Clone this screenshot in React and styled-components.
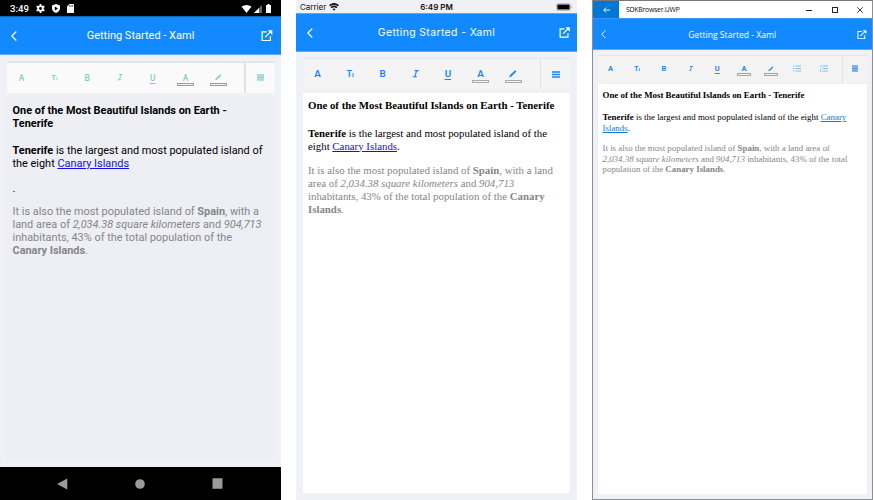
import React from 'react';
import styled, { createGlobalStyle } from 'styled-components';

const GlobalStyle = createGlobalStyle`
  * { box-sizing: border-box; }
  body { margin: 0; background: #fff; }
`;

const Board = styled.main`
  display: grid;
  grid-template-columns: 281px 281px 281px;
  column-gap: 15px;
  width: 873px;
  height: 500px;
  overflow: hidden;
`;

const Screen = styled.section`
  display: flex;
  flex-direction: column;
  height: 500px;
  min-width: 0;
  background: #eff1f6;
  font-family: ${p => p.$font};
`;

const WindowScreen = styled(Screen)`
  border: 1px solid #8d8f93;
  border-top-color: #77797c;
`;

const StatusBar = styled.div`
  display: flex;
  align-items: center;
  flex: none;
  height: ${p => p.$height}px;
  background: ${p => p.$bg};
  color: ${p => p.$color};
`;

const AndroidStatus = styled(StatusBar)`
  padding: 1px 8px 0 10px;
  font: 500 9.6px/16px Roboto, sans-serif;
  svg { display: block; }
`;
const Clock = styled.span`
  width: 26px;
`;
const StatusIcons = styled.div`
  display: flex;
  align-items: center;
  gap: ${p => p.$gap}px;
  margin-left: ${p => (p.$end ? 'auto' : '0')};
`;

const IosStatus = styled(StatusBar)`
  display: grid;
  grid-template-columns: 1fr auto 1fr;
  padding: 1px 4px 0 4px;
  font: 8px/12px Inter, "Liberation Sans", sans-serif;
`;
const Carrier = styled.div`
  display: flex;
  align-items: center;
  gap: 3px;
`;
const IosTime = styled.span`
  font-weight: 600;
`;
const BatteryWrap = styled.div`
  display: flex;
  justify-content: flex-end;
  align-items: center;
`;

const TitleBar = styled(StatusBar)`
  font: 6.9px/17px "Open Sans", sans-serif;
`;
const BackButton = styled.div`
  display: grid;
  place-items: center;
  width: 26px;
  height: 100%;
  background: #0078d7;
  margin-right: 7px;
`;
const WindowName = styled.span`
  letter-spacing: -0.25px;
`;
const WindowButtons = styled.div`
  display: flex;
  align-items: center;
  justify-content: space-between;
  width: 57px;
  margin: 0 9px 0 auto;
`;

const Header = styled.header`
  display: grid;
  grid-template-columns: 20px 1fr 20px;
  align-items: center;
  flex: none;
  height: ${p => p.$height}px;
  padding: ${p => p.$drop || 0}px ${p => p.$padRight}px 0 ${p => p.$padLeft}px;
  background: #1389ff;
  border-top: 1px solid ${p => p.$edge};
  border-bottom: 1px solid #58a9f9;
  color: #fff;
  svg { display: block; }
  > :last-child { justify-self: end; }
`;
const Title = styled.h1`
  margin: 0;
  padding-right: ${p => p.$shift || 0}px;
  text-align: center;
  white-space: nowrap;
  font-weight: 400;
  font-size: ${p => p.$size}px;
  line-height: 14px;
  letter-spacing: ${p => p.$spacing || 0}px;
`;

const Toolbar = styled.div`
  display: flex;
  flex: none;
  height: ${p => p.$height}px;
  margin: ${p => p.$margin};
  background: ${p => p.$bg};
  border-top: ${p => p.$line}px solid #e3e5e8;
  color: ${p => p.$color};
`;
const Tools = styled.div`
  display: flex;
  align-items: center;
  flex: 1;
  gap: ${p => p.$gap}px;
  padding-bottom: ${p => p.$lift || 0}px;
`;
const Tool = styled.div`
  display: flex;
  flex-direction: column;
  align-items: center;
  justify-content: center;
  flex: none;
  position: relative;
  width: ${p => p.$width}px;
  height: 22px;
  svg { display: block; }
`;
const Swatch = styled.span`
  position: absolute;
  left: 50%;
  top: ${p => p.$top}px;
  width: ${p => p.$width}px;
  height: 3px;
  margin-left: ${p => -p.$width / 2 + 0.5}px;
  border: 1px solid ${p => p.$edge};
  background: #f3f3f3;
`;
const MenuTool = styled.div`
  display: grid;
  place-items: center;
  flex: none;
  width: ${p => p.$width}px;
  padding-bottom: ${p => p.$lift || 0}px;
  border-left: ${p => p.$line}px solid #e1e2e4;
`;
const Letter = styled.span`
  font: ${p => p.$weight || 500} ${p => p.$size}px/10px Roboto, sans-serif;
  white-space: nowrap;
  text-decoration: ${p => (p.$under ? 'underline' : 'none')};
  text-underline-offset: 1.5px;
  text-decoration-thickness: 1px;
  small { font-size: 0.75em; }
`;

const Editor = styled.article`
  flex: 1;
  margin: ${p => p.$margin};
  padding: ${p => p.$padding};
  background: ${p => p.$bg};
  color: #000;
  font: ${p => p.$size}px/${p => p.$leading}px ${p => p.$font};
  overflow: hidden;
`;
const Paragraph = styled.p`
  margin: 0 0 ${p => p.$after}px;
  color: ${p => (p.$muted ? '#858688' : 'inherit')};
`;
const Line = styled.span`
  display: block;
  white-space: nowrap;
`;
const Link = styled.a`
  color: ${p => p.$color || '#1010ee'};
  text-decoration: underline;
`;

const NavBar = styled.nav`
  display: flex;
  justify-content: space-between;
  align-items: center;
  flex: none;
  height: 33px;
  padding: 0 58px 0 57px;
  background: #000;
`;

const Chevron = ({ size = 10 }) => (
  <svg width={size * 0.6} height={size} viewBox="0 0 6 10" fill="none" stroke="currentColor" strokeWidth="1.15">
    <path d="M5.3.5.8 5l4.5 4.5" />
  </svg>
);
const OpenIcon = ({ size = 12 }) => (
  <svg width={size} height={size} viewBox="0 0 12 12" fill="none" stroke="currentColor" strokeWidth="1.3">
    <path d="M6 2H1.2v9h8.6V6.5M4.5 7.3 9.6 2.2" />
    <path d="M7 .3h4.8v4.8z" fill="currentColor" stroke="none" />
  </svg>
);
const ItalicIcon = ({ size = 8 }) => (
  <svg width={size} height={size} viewBox="0 0 8 8" fill="none" stroke="currentColor" strokeWidth="1.2">
    <path d="M2.8.7h4.4M.8 7.3h4.4M5 .7 3 7.3" />
  </svg>
);
const PenIcon = ({ size = 8 }) => (
  <svg width={size} height={size} viewBox="0 0 8 8" fill="none" stroke="currentColor">
    <path d="M1.8 6.2 7.3.9" strokeWidth="2" />
    <path d="m.2 7.8.7-2.5 1.8 1.8z" fill="currentColor" stroke="none" />
  </svg>
);
const MenuIcon = ({ width = 8, soft }) => (
  <svg width={width} height="7" viewBox="0 0 8 7" preserveAspectRatio="none" fill="none" stroke="currentColor">
    {soft && <path d="M0 3.5h8" strokeWidth="6" opacity=".5" />}
    <path d="M0 1h8M0 3.5h8M0 6h8" strokeWidth={soft ? 0.9 : 1.3} />
  </svg>
);
const ListIcon = ({ numbered }) => (
  <svg width="8" height="7" viewBox="0 0 8 7" fill="none" stroke="currentColor" opacity=".65">
    <path d="M2.5 1H8M2.5 3.5H8M2.5 6H8" strokeWidth=".8" />
    <path d={numbered ? 'M1 0v2.5M.6 4.2v2.6' : 'M0 1h1.2M0 3.5h1.2M0 6h1.2'} strokeWidth=".8" />
  </svg>
);

const GearIcon = () => (
  <svg width="9" height="9" viewBox="0 0 10 10">
    <circle cx="5" cy="5" r="2.6" fill="none" stroke="#fff" strokeWidth="2" />
    <path d="M5 0v2M5 8v2M.7 2.5l1.8 1M7.5 6.5l1.8 1M.7 7.5l1.8-1M7.5 3.5l1.8-1" stroke="#fff" strokeWidth="2" />
  </svg>
);
const ShieldIcon = () => (
  <svg width="8" height="9" viewBox="0 0 8 9">
    <path d="M4 0 8 1.4V4.5Q7.6 7.8 4 9 .4 7.8 0 4.5V1.4z" fill="#fff" />
    <path d="M2.8 2.4 6 4.4 2.8 6.4z" fill="#000" />
  </svg>
);
const CardIcon = () => (
  <svg width="7" height="9" viewBox="0 0 7 9">
    <path d="M2.4 0H6.4Q7 0 7 .6V8.4Q7 9 6.4 9H.6Q0 9 0 8.4V2.4z" fill="#fff" />
    <path d="M2.6 1v1.8M4.1 1v1.8M5.6 1v1.8" stroke="#222" strokeWidth=".7" />
  </svg>
);

function ToolSet({ cell, size, weight, swatchWidth, swatchTop, swatchEdge, lists }) {
  const letter = { $size: size, $weight: weight };
  const swatch = { $width: swatchWidth, $top: swatchTop, $edge: swatchEdge };
  return (
    <>
      <Tool $width={cell}><Letter {...letter}>A</Letter></Tool>
      <Tool $width={cell}><Letter {...letter} $size={size * 0.92}>T<small>ı</small></Letter></Tool>
      <Tool $width={cell}><Letter {...letter}>B</Letter></Tool>
      <Tool $width={cell}><ItalicIcon size={size * 0.76} /></Tool>
      <Tool $width={cell}><Letter {...letter} $under>U</Letter></Tool>
      <Tool $width={cell}>
        <Letter {...letter}>A</Letter>
        <Swatch {...swatch} />
      </Tool>
      <Tool $width={cell}>
        <PenIcon size={size * 0.76} />
        <Swatch {...swatch} />
      </Tool>
      {lists && <Tool $width={cell}><ListIcon /></Tool>}
      {lists && <Tool $width={cell}><ListIcon numbered /></Tool>}
    </>
  );
}

function AndroidScreen() {
  return (
    <Screen $font="Roboto, sans-serif">
      <AndroidStatus $height={16} $bg="#000" $color="#fff">
        <Clock>3:49</Clock>
        <StatusIcons $gap={7}><GearIcon /><ShieldIcon /><CardIcon /></StatusIcons>
        <StatusIcons $gap={2} $end>
          <svg width="11" height="8" viewBox="0 0 10 8"><path d="M0 1.5Q5-1.5 10 1.5L5 8z" fill="#fff" /></svg>
          <svg width="8" height="8" viewBox="0 0 8 8"><path d="M8 0v8H0z" fill="#666" /><path d="M5 3v5H0z" fill="#fff" /></svg>
          <svg width="9" height="9" viewBox="0 0 9 9"><path d="M2 1h1.5V0h2v1H7v8H2z" fill="#fff" /></svg>
        </StatusIcons>
      </AndroidStatus>
      <Header $height={39} $padLeft={10.5} $padRight={8.5} $edge="#0d65bb">
        <Chevron size={10} />
        <Title as="h1" $size={11} $shift={2}>Getting Started - Xaml</Title>
        <OpenIcon size={11.5} />
      </Header>
      <Toolbar $height={32} $margin="6px 6px 0 7px" $bg="#fafafa" $line={2} $color="#7ccfc2">
        <Tools $gap={3.8} $lift={1}>
          <ToolSet cell={29} size={8.4} swatchWidth={17} swatchTop={16} swatchEdge="#9b9b9b" />
        </Tools>
        <MenuTool $width={31} $line={2} $lift={1}><MenuIcon width={7} soft /></MenuTool>
      </Toolbar>
      <Editor $margin="4px 7px 6px" $padding="7px 5.5px" $bg="#eeeff4" $size={10.92} $leading={13} $font="Roboto, sans-serif">
        <Paragraph $after={14}>
          <Line><b>One of the Most Beautiful Islands on Earth -</b></Line>
          <Line><b>Tenerife</b></Line>
        </Paragraph>
        <Paragraph $after={12}>
          <Line><b>Tenerife</b> is the largest and most populated island of</Line>
          <Line>the eight <Link>Canary Islands</Link></Line>
        </Paragraph>
        <Paragraph $after={10}>.</Paragraph>
        <Paragraph $muted $after={0}>
          <Line>It is also the most populated island of <b>Spain</b>, with a</Line>
          <Line>land area of <i>2,034.38 square kilometers</i> and <i>904,713</i></Line>
          <Line>inhabitants, 43% of the total population of the</Line>
          <Line><b>Canary Islands</b>.</Line>
        </Paragraph>
      </Editor>
      <NavBar>
        <svg width="11" height="12" viewBox="0 0 11 12"><path d="M10.3.5v11L0 6z" fill="#999b9b" /></svg>
        <svg width="10" height="10" viewBox="0 0 10 10"><circle cx="5" cy="5" r="4.8" fill="#999b9b" /></svg>
        <svg width="11" height="11" viewBox="0 0 11 11"><rect x=".5" y=".3" width="10" height="10.5" rx=".4" fill="#999b9b" /></svg>
      </NavBar>
    </Screen>
  );
}

function IosScreen() {
  return (
    <Screen $font="Inter, sans-serif">
      <IosStatus $height={13} $bg="#eff1f6" $color="#111">
        <Carrier>
          Carrier
          <svg width="10" height="8" viewBox="0 0 10 8" fill="none" stroke="#111" strokeWidth="1.6">
            <path d="M.5 2.7Q5-1.1 9.5 2.7M2.1 4.7Q5 2.2 7.9 4.7" />
            <path d="M3.5 6Q5 5 6.5 6L5 7.8z" fill="#111" stroke="none" />
          </svg>
        </Carrier>
        <IosTime>6:49 PM</IosTime>
        <BatteryWrap>
          <svg width="17" height="8" viewBox="0 0 17 8">
            <rect x=".5" y=".5" width="14" height="7" rx="1.8" fill="#fff" stroke="#999" strokeWidth=".6" />
            <rect x="1.4" y="1.4" width="12.2" height="5.2" rx=".9" />
            <path d="M15.5 2.8q1.2 1.2 0 2.4z" fill="#777" />
          </svg>
        </BatteryWrap>
      </IosStatus>
      <Header $height={39} $padLeft={10.5} $padRight={7.5} $edge="#58a9f9">
        <Chevron size={10} />
        <Title $size={10.4} $spacing={0.4} $shift={3}>Getting Started - Xaml</Title>
        <OpenIcon size={11} />
      </Header>
      <Toolbar $height={31} $margin="6px 7px 0 6.5px" $bg="#f4f4f4" $line={1} $color="#1684ff">
        <Tools $gap={2.6}>
          <ToolSet cell={30} size={9.8} weight={600} swatchWidth={17} swatchTop={17} swatchEdge="#aaa" />
        </Tools>
        <MenuTool $width={30} $line={1}><MenuIcon width={8} /></MenuTool>
      </Toolbar>
      <Editor $margin="4px 7px 7px 6.5px" $padding="6px 5.5px" $bg="#fff" $size={10.83} $leading={13} $font='"Liberation Serif", serif'>
        <Paragraph $after={14.5}>
          <Line><b>One of the Most Beautiful Islands on Earth - Tenerife</b></Line>
        </Paragraph>
        <Paragraph $after={11}>
          <Line><b>Tenerife</b> is the largest and most populated island of the</Line>
          <Line>eight <Link>Canary Islands</Link>.</Line>
        </Paragraph>
        <Paragraph $muted $after={0}>
          <Line>It is also the most populated island of <b>Spain</b>, with a land</Line>
          <Line>area of <i>2,034.38 square kilometers</i> and <i>904,713</i></Line>
          <Line>inhabitants, 43% of the total population of the <b>Canary</b></Line>
          <Line><b>Islands</b>.</Line>
        </Paragraph>
      </Editor>
    </Screen>
  );
}

function DesktopScreen() {
  return (
    <WindowScreen $font='"Open Sans", sans-serif'>
      <TitleBar $height={17} $bg="#fff" $color="#111">
        <BackButton>
          <svg width="7" height="6" viewBox="0 0 7 6" fill="none" stroke="#fff" strokeWidth=".9"><path d="M7 3H.8M3.2.5.7 3l2.5 2.5" /></svg>
        </BackButton>
        <WindowName>SDKBrowser.UWP</WindowName>
        <WindowButtons>
          <svg width="6" height="6" viewBox="0 0 6 6" stroke="#222"><path d="M0 3.5h6" /></svg>
          <svg width="6" height="6" viewBox="0 0 6 6" fill="none" stroke="#222"><rect x=".5" y=".5" width="5" height="5" /></svg>
          <svg width="6" height="6" viewBox="0 0 6 6" stroke="#222" strokeWidth=".9"><path d="m.3.3 5.4 5.4M5.7.3.3 5.7" /></svg>
        </WindowButtons>
      </TitleBar>
      <Header $height={32} $padLeft={8} $padRight={5.5} $edge="#3795f7" $drop={1}>
        <Chevron size={8.5} />
        <Title $size={8.6} $shift={3}>Getting Started - Xaml</Title>
        <OpenIcon size={9.5} />
      </Header>
      <Toolbar $height={28} $margin="5px 5px 0" $bg="#f3f3f3" $line={1} $color="#2c8ad8">
        <Tools $gap={1.7} $lift={2}>
          <ToolSet cell={25} size={7.5} weight={700} swatchWidth={14} swatchTop={15} swatchEdge="#a4a4a4" lists />
        </Tools>
        <MenuTool $width={25} $line={1} $lift={2}><MenuIcon width={6} soft /></MenuTool>
      </Toolbar>
      <Editor $margin="1px 5px 5px" $padding="6px 4.5px" $bg="#fff" $size={8.9} $leading={10.7} $font='"Liberation Serif", serif'>
        <Paragraph $after={11.4}>
          <Line><b>One of the Most Beautiful Islands on Earth - Tenerife</b></Line>
        </Paragraph>
        <Paragraph $after={9.5}>
          <Line><b>Tenerife</b> is the largest and most populated island of the eight <Link $color="#1479d5">Canary</Link></Line>
          <Line><Link $color="#1479d5">Islands</Link>.</Line>
        </Paragraph>
        <Paragraph $muted $after={0}>
          <Line>It is also the most populated island of <b>Spain</b>, with a land area of</Line>
          <Line><i>2,034.38 square kilometers</i> and <i>904,713</i> inhabitants, 43% of the total</Line>
          <Line>population of the <b>Canary Islands</b>.</Line>
        </Paragraph>
      </Editor>
    </WindowScreen>
  );
}

export default function App() {
  return (
    <>
      <GlobalStyle />
      <Board>
        <AndroidScreen />
        <IosScreen />
        <DesktopScreen />
      </Board>
    </>
  );
}
